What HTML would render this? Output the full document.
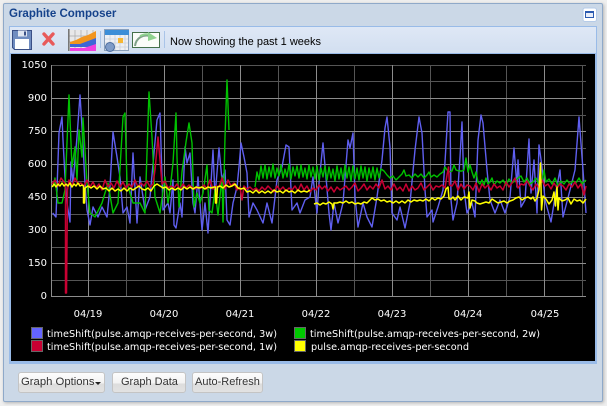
<!DOCTYPE html>
<html><head><meta charset="utf-8"><style>
html,body{margin:0;padding:0;width:607px;height:406px;overflow:hidden;background:#efefef}
#p{position:absolute;left:3px;top:3px;width:598px;height:397px;background:#cbd8e7;border:1px solid #8fa9c9;border-radius:2px;box-shadow:1px 1px 3px rgba(0,0,0,.25)}
.t{position:absolute;white-space:nowrap;font-family:"Liberation Sans",sans-serif}
#tb{position:absolute;left:9px;top:26px;width:586px;height:26px;background:linear-gradient(#dfe8f6,#d2dff0);border:1px solid #99bbe8}
#ch{position:absolute;left:9px;top:53px;width:588px;height:311px;background:#99bbe8}
.b{position:absolute;top:372px;height:19px;border:1px solid #c4c4c4;border-radius:3px;background:linear-gradient(#fdfdfd 0,#f2f2f2 55%,#dcdcdc 56%,#e2e2e2 100%);font:11px "Liberation Sans",sans-serif;color:#333;line-height:19px;white-space:nowrap;box-sizing:content-box}
</style></head><body>
<div id="p"></div>
<div class="t" style="left:9px;top:7px;font-size:11.5px;font-weight:bold;color:#15428b;line-height:15px">Graphite Composer</div>
<div id="tb"></div>
<div id="ch"></div>
<svg style="position:absolute;left:0;top:0" width="607" height="406" viewBox="0 0 607 406">
<!-- collapse -->
<rect x="583" y="8" width="13.5" height="13.5" rx="2" fill="#fff" stroke="#b5cbe8"/>
<rect x="585.5" y="11.5" width="8" height="6" fill="#e8eefa" stroke="#2c5bb0"/>
<rect x="585" y="11" width="9" height="2" fill="#2c5bb0"/>
<!-- save -->
<path d="M12.5 30.5H31.5V49.5H14.5L12.5 47.5Z" fill="#6f8cc0" stroke="#3a4f86"/>
<rect x="15" y="39" width="14" height="10" fill="#fff"/>
<rect x="18" y="30.5" width="9" height="6" fill="#dfe6f2"/><rect x="24" y="31.5" width="2" height="4" fill="#3a4f86"/>
<!-- delete -->
<path d="M44 34L53 44M53 34L44 44" stroke="#e85a5a" stroke-width="3.4" stroke-linecap="round"/>
<!-- chart icon -->
<rect x="69" y="30" width="27" height="21" fill="#e8e8e8"/>
<path d="M69 36H96M69 42H96M75 30V51M81 30V51M87 30V51M93 30V51" stroke="#a8a8a8" stroke-width=".7"/>
<rect x="68" y="29" width="1.6" height="22" fill="#777"/>
<path d="M70 42L76 40L82 37L88 35L96 31V44H70Z" fill="#f2951e"/>
<path d="M70 44L80 44L88 41L96 38V47H70Z" fill="#3d66d6"/>
<path d="M70 48L84 48L90 46L96 44V51H70Z" fill="#f03fe0"/>
<!-- calendar -->
<rect x="104.5" y="29.5" width="24" height="21" fill="#eef0f4" stroke="#8aa0bc"/>
<rect x="105" y="30" width="24" height="5" fill="#3c8ed8"/>
<path d="M105 39H128M105 43H128M105 47H128M110 35V50M115 35V50M120 35V50M125 35V50" stroke="#c9cfd9" stroke-width=".8"/>
<rect x="118" y="38" width="5" height="5" fill="#f7b733"/>
<circle cx="110" cy="47" r="4.5" fill="#7f9cc8" stroke="#4c6d9f"/>
<!-- arrow -->
<rect x="132.5" y="32.5" width="27" height="15" fill="#fafcf8" stroke="#44704a"/>
<path d="M135 46C136 38 143 34 150 36" fill="none" stroke="#7fa088" stroke-width="2"/>
<path d="M148 32L157 38L148 41Z" fill="#8fd28f"/>
<path d="M140 36Q146 33 150 35" stroke="#8fd28f" stroke-width="2" fill="none"/>
<rect x="100" y="31" width="1" height="17" fill="#a9c4e8"/><rect x="164" y="31" width="1" height="17" fill="#a9c4e8"/>
<!-- chart -->
<rect x="11" y="54" width="584" height="307" fill="#000"/>
<g stroke="#555" stroke-width="1" shape-rendering="crispEdges">
<path d="M51 65.5H586M51 81.5H586M51 115.5H586M51 148.5H586M51 181.5H586M51 214.5H586M51 247.5H586M51 280.5H586"/>
<path d="M126.5 65V296M202.5 65V296M278.5 65V296M354.5 65V296M430.5 65V296M506.5 65V296M582.5 65V296"/>
</g>
<g stroke="#8c8c8c" stroke-width="1" shape-rendering="crispEdges">
<path d="M51 98.5H586M51 131.5H586M51 164.5H586M51 197.5H586M51 230.5H586M51 263.5H586M51 296.5H586"/>
<path d="M51.5 65V296M88.5 65V296M164.5 65V296M240.5 65V296M316.5 65V296M392.5 65V296M468.5 65V296M544.5 65V296"/>
</g>
<g fill="none" stroke-width="1.4" stroke-linejoin="round">
<polyline stroke="#5f5ff0" points="52.7,213 56,217 59,133 62,117 63,140 65,177 67,203 70,222 71,162 73,183 77,137 80,95 82,127 85,183 87,210 90,225 93,207 98,217 102,207 107,217 110,187 113,132 117,157 120,177 123,213 127,207 130,223 133,153 137,223 140,177 145,210 150,197 157,120 160,113 163,210 168,203 170,213 173,180 174,225 176,228 180,203 182,217 185,147 187,163 190,153 193,203 195,213 198,177 202,230 205,203 208,233 213,150 215,197 219,148 222,180 225,170 227,220 230,225 233,203 237,187 239,167 241,143 244,157 247,173 249,217 253,203 257,210 263,223 267,203 272,223 277,180 282,167 286,145 289,147 292,210 297,203 300,213 305,200 310,197 313,177 317,213 319,183 323,143 326,177 329,213 331,230 334,203 338,223 343,203 348,140 350,148 353,133 355,197 358,227 363,203 367,217 372,227 377,197 382,160 385,128 387,117 390,147 392,213 397,220 400,207 405,228 410,203 415,150 419,117 422,133 425,190 427,217 432,210 433,222 438,207 443,190 445,162 448,112 450,112 451,200 453,220 457,203 460,157 462,122 464,190 467,213 472,203 475,217 478,140 481,115 483,123 487,170 490,200 495,213 500,200 505,213 510,197 514,148 517,187 518,160 521,207 525,200 529,139 531,193 534,160 537,213 539,145 542,167 545,200 551,222 555,197 560,170 563,217 570,190 575,170 579,117 583,170 586,213"/>
<polyline stroke="#00c000" points="53,187 55,178 58,203 62,203 65,190 69,95 72,167 75,147 77,180 79,130 82,157 83,118 87,183 90,213 95,217 102,203 108,183 113,213 118,203 123,117 125,113 127,183 133,203 140,203 145,213 149,92 152,137 155,197 160,213 165,177 168,203 170,190 173,163 176,113 177,157 179,207 182,172 186,142 189,123 192,143 194,207 197,193 200,203 203,193 207,165 209,210 212,213 215,190 218,215 222,177 223,222 225,137 227,80 229,130"/>
<polyline stroke="#00c000" points="255,187 257,172 259,180 261,166 263,178 265,165 267,179 269,167 271,177 273,164 275,178 277,168 279,176 281,165 283,178 285,169 287,177 289,164 291,179 293,167 295,176 297,166 299,178 301,165 303,177 305,168 307,179 309,165 311,177 313,167 315,179 317,166 319,180 321,168 323,177 325,166 327,180 329,167 331,178 333,169 335,181 337,166 339,179 341,168 343,180 345,165 347,178 349,167 351,181 353,166 355,179 357,168 359,180 361,166 363,178 365,167 367,181 369,168 371,178 373,167 375,180 377,168 379,178 381,169 384,171 387,175 390,178 393,176 396,180 399,177 402,174 404,170 406,176 409,175 412,178 415,174 418,177 421,174 424,178 427,175 429,172 431,177 434,175 437,177 440,174 443,172 445,167 447,170 449,172 452,171 454,165 456,170 459,171 462,171 464,170 466,158 468,172 470,165 472,172 474,178 476,172 478,182 480,184 482,180 484,185 486,178 488,184 490,182 492,178 494,185 497,181 500,183 503,180 506,185 509,179 512,183 515,181 518,178 521,176 524,182 527,178 530,184 533,182 536,178 539,184 542,182 544,170 546,182 549,179 552,184 555,178 558,186 561,181 564,184 567,180 570,184 573,181 576,183 579,178 582,184 586,180"/>
<polyline stroke="#c80032" stroke-width="1.5" points="52,184 55,180 58,186 61,178 64,182 65.5,184 65.5,293 66.5,293 67.5,190 69,180 72,186 75,178 78,184 81,183 84,186 87,180 90,187 93,182 96,188 99,184 102,190 105,180 108,187 111,183 114,188 117,181 120,187 123,182 126,188 129,184 132,187 135,180 138,187 141,183 144,186 147,181 150,187 153,184 155,170 158,137 160,160 162,184 165,181 168,188 171,186 174,188 177,184 180,189 183,184 186,188 189,185 192,187 195,189 198,187 201,188 204,185 207,189 210,180 213,189 216,186 219,187 222,178 225,189 228,180 231,186 234,183 237,190 240,187 242,200 244,186 247,189 250,187 253,190 256,188 259,191 262,187 265,190 268,186 271,189 274,192 277,186 280,190 283,187 286,191 289,188 292,190 295,186 298,191 301,184 304,190 307,186 310,192 313,188 316,190 319,185 322,189 325,186 328,191 331,187 334,192 337,187 340,190 343,188 346,186 349,190 352,187 355,183 358,191 361,188 364,184 367,190 370,186 373,189 376,184 379,188 382,180 385,189 388,186 391,190 394,184 397,190 400,187 403,191 406,184 409,191 412,186 415,190 418,188 421,183 424,190 427,187 430,184 433,190 436,186 439,187 442,185 445,188 447,175 448.5,167 449.5,185 452,186 455,181 458,190 461,184 464,189 467,185 470,186 473,190 476,183 479,192 482,184 485,188 488,185 491,190 494,184 497,188 500,186 503,190 506,182 509,187 512,183 515,178 518,188 521,184 524,185 527,181 530,186 533,190 536,184 539,188 542,180 545,186 548,184 551,189 554,183 557,188 560,184 563,186 566,190 569,184 572,187 575,182 578,188 581,184 584,195 586,186"/>
<polyline stroke="#ffff00" stroke-width="1.5" points="52,187 54,184 56,187 58,184 60,186 62,183 64,186 66,184 68,186 70,183 72,187 74,184 76,186 78,183 80,186 82,185 83.5,186 83.5,203 84.5,203 85,188 88,186 91,188 94,186 97,189 100,186 103,189 106,188 109,191 112,188 115,191 118,189 121,191 124,188 127,191 130,188 133,190 136,188 139,186 142,189 145,190 148,188 151,191 154,186 157,184 160,186 163,188 166,187 169,190 172,188 175,190 178,188 181,190 184,187 187,189 190,187 193,189 196,187 199,188 202,187 205,189 208,187 211,188 214,187 215.5,187 215.5,203 216.5,203 217.5,187 220,186 223,188 226,185 229,187 232,186 235,184 238,188 241,189 244,188 247,192 250,191 253,193 256,190 259,193 262,191 265,193 268,191 271,193 274,190 277,192 280,191 283,193 286,190 289,192 292,191 295,193 298,190 301,192 304,191 307,192 310,190"/>
<polyline stroke="#ffff00" stroke-width="1.5" points="314,204 317,203 320,205 323,203 326,204 329,202 332,204 333,209 334,203 337,203 340,202 343,203 346,201 349,203 352,202 355,204 358,203 361,204 364,202 367,203 370,200 372,198 375,200 378,199 381,201 384,200 387,202 390,201 393,203 396,201 399,203 402,201 405,203 408,200 411,202 414,200 417,201 420,200 423,201 426,199 429,201 432,198 435,200 438,198 441,199 444,196 446,189 448,187 449,199 451,199 453,197 455,200 458,196 461,200 464,197 468,198 469,192 470,208 472,200 475,201 477,203 480,204 483,203 486,202 489,203 492,199 495,201 498,203 501,202 504,201 507,203 510,201 513,200 516,198 519,197 522,200 525,198 528,197 531,199 533,197 535,201 537,198 539,190 540.5,163 541.5,210 543,196 546,199 549,204 552,200 554,192 555.5,206 557,187 558,210 559,198 562,201 565,200 568,198 571,204 574,199 577,201 580,200 583,203 586,199"/>
</g>
<g fill="#fff" font-family="'DejaVu Sans',sans-serif" font-size="10">
<g text-anchor="end"><text x="47" y="68">1050</text><text x="47" y="101">900</text><text x="47" y="134">750</text><text x="47" y="167">600</text><text x="47" y="200">450</text><text x="47" y="233">300</text><text x="47" y="266">150</text><text x="47" y="299">0</text></g>
<g text-anchor="middle"><text x="88" y="317">04/19</text><text x="164" y="317">04/20</text><text x="240" y="317">04/21</text><text x="316" y="317">04/22</text><text x="392" y="317">04/23</text><text x="468" y="317">04/24</text><text x="545" y="317">04/25</text></g>
<text x="47" y="337" textLength="230" lengthAdjust="spacingAndGlyphs">timeShift(pulse.amqp-receives-per-second, 3w)</text>
<text x="47" y="350" textLength="230" lengthAdjust="spacingAndGlyphs">timeShift(pulse.amqp-receives-per-second, 1w)</text>
<text x="310" y="337" textLength="230" lengthAdjust="spacingAndGlyphs">timeShift(pulse.amqp-receives-per-second, 2w)</text>
<text x="311" y="350" textLength="158" lengthAdjust="spacingAndGlyphs">pulse.amqp-receives-per-second</text>
</g>
<g stroke="#666" stroke-width="1">
<rect x="31.5" y="327.5" width="11" height="11" fill="#6464ff"/>
<rect x="31.5" y="340.5" width="11" height="11" fill="#c80032"/>
<rect x="294.5" y="327.5" width="11" height="11" fill="#00c800"/>
<rect x="294.5" y="340.5" width="11" height="11" fill="#ffff00"/>
</g>
</svg>
<div class="t" style="left:170px;top:35px;font-size:11px;line-height:14px;color:#000">Now showing the past 1 weeks</div>
<div class="b" style="left:18px;width:85px"><span style="position:absolute;left:2px;font-size:11.3px">Graph Options</span><span style="position:absolute;left:76px;top:9px;width:0;height:0;border:3px solid transparent;border-top:3px solid #222;border-bottom:0"></span></div>
<div class="b" style="left:112px;width:72px"><span style="position:absolute;left:8px">Graph Data</span></div>
<div class="b" style="left:192px;width:69px"><span style="position:absolute;left:2px">Auto-Refresh</span></div>
</body></html>
